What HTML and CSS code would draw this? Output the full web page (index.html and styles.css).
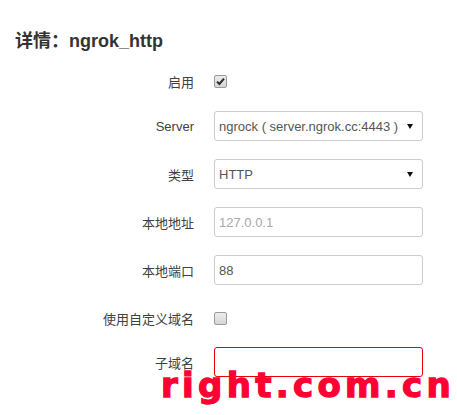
FILE: index.html
```html
<!DOCTYPE html>
<html lang="zh-CN">
<head>
<meta charset="utf-8">
<title>详情：ngrok_http</title>
<link rel="stylesheet" href="styles.css">
</head>
<body>
<div class="page">
  <h2 class="title">详情：ngrok_http</h2>
  <div class="form">
    <div class="row row-first">
      <label class="label">启用</label>
      <div class="field">
        <span class="checkbox">
          <svg width="9" height="9" viewBox="0 0 9 9"><path d="M1 4.6 L3.4 7 L8 1.6" fill="none" stroke="#2b2b2b" stroke-width="2"/></svg>
        </span>
      </div>
    </div>
    <div class="row row-server">
      <label class="label">Server</label>
      <div class="field">
        <div class="box select"><span>ngrock ( server.ngrok.cc:4443 )</span><svg class="arrow" width="6" height="5" viewBox="0 0 6 5"><path d="M0 0 H6 L3 5 Z" fill="#111"/></svg></div>
      </div>
    </div>
    <div class="row">
      <label class="label">类型</label>
      <div class="field">
        <div class="box select"><span>HTTP</span><svg class="arrow" width="6" height="5" viewBox="0 0 6 5"><path d="M0 0 H6 L3 5 Z" fill="#111"/></svg></div>
      </div>
    </div>
    <div class="row">
      <label class="label">本地地址</label>
      <div class="field">
        <div class="box input placeholder">127.0.0.1</div>
      </div>
    </div>
    <div class="row">
      <label class="label">本地端口</label>
      <div class="field">
        <div class="box input">88</div>
      </div>
    </div>
    <div class="row row-check">
      <label class="label">使用自定义域名</label>
      <div class="field">
        <span class="checkbox"></span>
      </div>
    </div>
    <div class="row row-sub">
      <label class="label">子域名</label>
      <div class="field">
        <div class="box input error"></div>
      </div>
    </div>
  </div>
  <div class="watermark">right.com.cn</div>
</div>
</body>
</html>
```

FILE: styles.css
```css
html, body {
  margin: 0;
  padding: 0;
  background: #ffffff;
}

.page {
  position: relative;
  width: 457px;
  height: 415px;
  overflow: hidden;
  padding: 0 0 0 15px;
  box-sizing: border-box;
  font-family: "Liberation Sans", "Noto Sans CJK SC", sans-serif;
  color: #333333;
}

.title {
  margin: 0;
  padding-top: 30px;
  height: 22px;
  line-height: 22px;
  font-size: 18px;
  font-weight: bold;
  color: #333333;
}

.form {
  display: flex;
  flex-direction: column;
  margin-top: 14px;
}

.row {
  display: flex;
  align-items: center;
  height: 30px;
  margin-top: 18px;
}

.row-first {
  margin-top: 0;
}

.row-server {
  margin-top: 15px;
}

.row-sub {
  margin-top: 14px;
}

.label {
  width: 179px;
  text-align: right;
  font-size: 13px;
  color: #404040;
  padding-right: 20px;
  font-family: "Liberation Sans", "Noto Sans CJK SC", sans-serif;
}

.field {
  display: flex;
  align-items: center;
}

.box {
  width: 209px;
  height: 30px;
  box-sizing: border-box;
  border: 1px solid #cccccc;
  border-radius: 3px;
  font-size: 13px;
  color: #555555;
  padding: 0 9px 0 4px;
  display: flex;
  align-items: center;
  background: #ffffff;
}

.select {
  justify-content: space-between;
}

.arrow {
  display: block;
}

.placeholder {
  color: #a8a8a8;
}

.error {
  border-color: #e8000b;
}

.checkbox {
  width: 13px;
  height: 13px;
  box-sizing: border-box;
  border: 1px solid #9a9a9a;
  border-radius: 2px;
  background: linear-gradient(#ececec, #d6d6d6);
  display: flex;
  align-items: center;
  justify-content: center;
}

.watermark {
  position: absolute;
  left: 161px;
  top: 365px;
  font-family: "DejaVu Sans", sans-serif;
  font-weight: bold;
  font-size: 34px;
  letter-spacing: 4.3px;
  color: #ff0033;
  -webkit-text-stroke: 1.3px #ff0033;
  line-height: 40px;
  white-space: nowrap;
}
```
